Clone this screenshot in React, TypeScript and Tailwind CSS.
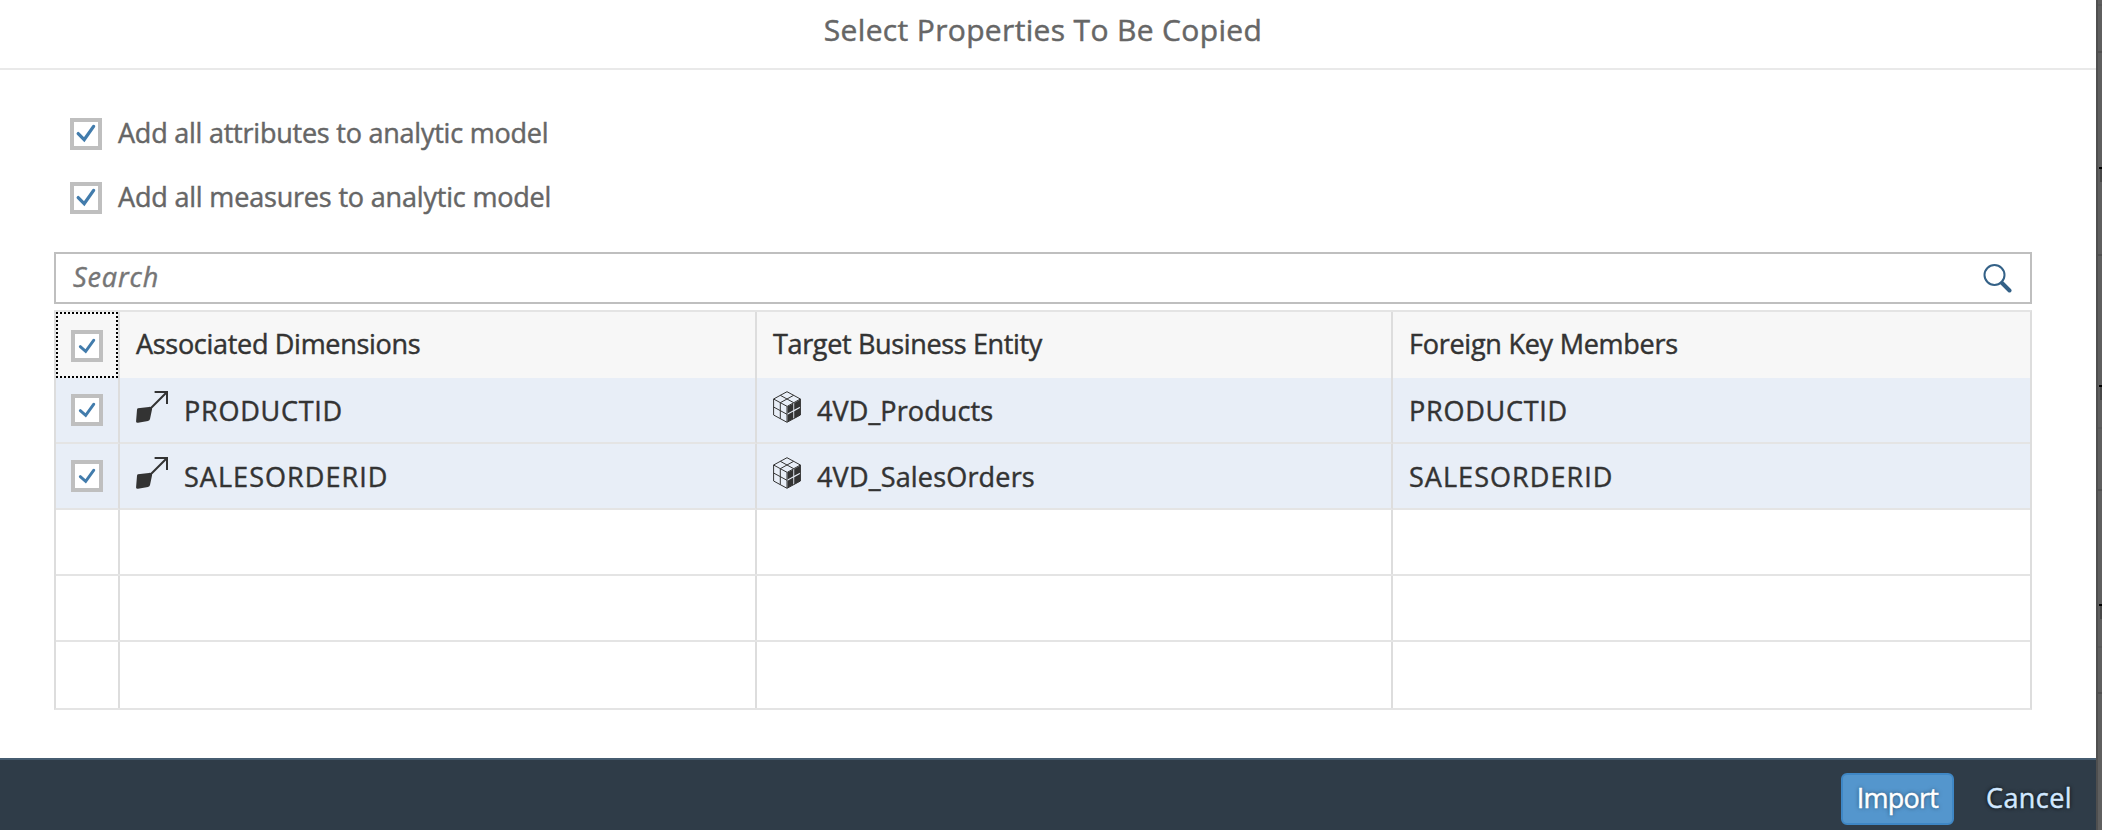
import React from "react";

function Check({ small = false }: { small?: boolean }) {
  return (
    <span className="flex h-8 w-8 shrink-0 items-center justify-center border-4 border-[#bfbfbf] bg-white">
      <svg viewBox="0 0 24 24" className="h-6 w-6" fill="none" stroke="#427cac" strokeLinecap="round" strokeLinejoin="miter">
        {small ? <path d="M5.3 12.6 L10.7 17.4 L18.8 6.2" strokeWidth="2.9" /> : <path d="M4.2 11.6 L10.2 17.6 L19.6 4.4" strokeWidth="3.3" />}
      </svg>
    </span>
  );
}

function AssociationIcon() {
  return (
    <svg viewBox="0 0 32 32" className="h-8 w-8 shrink-0" fill="none">
      <path d="M1.9 17.3 L13 15.9 Q16.6 15.4 16 18.6 L14 28 Q13.7 29.7 12 30 L2 31.8 Q-0.2 32 0.1 30 L1 18.7 Q1.1 17.5 1.9 17.3 Z" fill="#333" />
      <path d="M14.5 17.5 L31 1 M18.6 1 H31 V13" stroke="#333" strokeWidth="2" />
    </svg>
  );
}

function CubeIcon() {
  return (
    <svg viewBox="0 0 28 32" className="h-8 w-7 shrink-0" fill="none" stroke="#333" strokeWidth="1">
      <path d="M14 .7 L27.4 8 V24 L14 31.3 L.6 24 V8 Z M.6 8 L14 15.3 V31 M7.3 4.3 L20.7 11.7 M20.7 4.3 L7.3 11.7 V27.6 M.6 16 L14 23.3" />
      <path d="M14.5 15.6 L20.3 12.4 V19.3 L14.5 22.5 Z M21.2 11.9 L27.4 8.5 V15.4 L21.2 18.8 Z M14.5 23.8 L20.3 20.6 V27.8 L14.5 31 Z M21.2 20.2 L27.4 16.8 V24 L21.2 27.4 Z" fill="#333" stroke="none" />
      <path d="M14.3 15.3 L27.4 8" />
    </svg>
  );
}

const rows = [
  { dimension: "PRODUCTID", entity: "4VD_Products", key: "PRODUCTID", keyTracking: "tracking-[0.75px]", entityTracking: "tracking-[0.1px]" },
  { dimension: "SALESORDERID", entity: "4VD_SalesOrders", key: "SALESORDERID", keyTracking: "tracking-[1.05px]", entityTracking: "tracking-[0.18px]" },
];

const grid = "grid grid-cols-[64px_637px_636px_637px]";
const cell = "border-r-2 border-[#dddddd]";
const bodyCell = "flex items-center gap-4 border-b-2 border-b-[#e4e4e4] pt-0.5 pl-4";

// Horizontal rules of the canvas behind the dialog: the gap above each rule and its colour.
const canvasLines = [
  { gap: "h-[4px]", line: "bg-[#585858]" },
  { gap: "h-[45px]", line: "bg-[#505050]" },
  { gap: "h-[201px]", line: "bg-[#505050]" },
  { gap: "h-[171px]", line: "bg-[#585858]" },
  { gap: "h-[60px]", line: "bg-[#505050]" },
  { gap: "h-[155px]", line: "bg-[#585858]" },
  { gap: "h-[44px]", line: "bg-[#505050]" },
];
const markers = ["top-[167px]", "top-[385px]", "top-[604px]"];

export default function App() {
  return (
    <div className="flex h-[830px] w-[2102px] overflow-hidden bg-[#5f5f5f] font-['Open_Sans',sans-serif] text-[27px] leading-[36px] whitespace-nowrap text-[#333] [-webkit-text-stroke:0.45px_currentColor]">
      <div className="flex w-[2096px] flex-col bg-white">
        <header className="flex h-[70px] justify-center border-b-2 border-[#e9e9e9] pt-[12px] pr-[10px] text-[30px] text-[#666]">
          <h1 className="tracking-[0.35px]">Select Properties To Be Copied</h1>
        </header>
        <main className="flex flex-1 flex-col pr-[64px] pl-[54px]">
          <div className="flex flex-col gap-8 pt-12 pl-4 text-[#666]">
            <label className="flex h-8 items-center gap-4"><Check /><span className="pb-0.5 tracking-[-0.23px]">Add all attributes to analytic model</span></label>
            <label className="flex h-8 items-center gap-4"><Check /><span className="pb-0.5 tracking-[-0.18px]">Add all measures to analytic model</span></label>
          </div>
          <div className="mt-[38px] flex h-[52px] items-center justify-between border-2 border-[#bfbfbf] pr-[18px] pl-[17px]">
            <span className="pb-0.5 tracking-[0.9px] text-[#757575] italic">Search</span>
            <svg viewBox="0 0 30 30" className="h-[30px] w-[30px]" fill="none" stroke="#346187">
              <circle cx="12.5" cy="12" r="10" strokeWidth="2" />
              <path d="M20 20 L27.5 27.5" strokeWidth="4" strokeLinecap="round" />
            </svg>
          </div>
          <div className="mt-[6px] flex h-[400px] flex-col border-2 border-x-[#dddddd] border-y-[#e4e4e4]">
            <div className={`${grid} h-[66px] bg-[#f7f7f7]`}>
              <div className={cell}><div className="flex h-full items-center border-2 border-dotted border-black pt-0.5 pl-[13px]"><Check small /></div></div>
              <div className={`${cell} flex items-center pb-0.5 pl-4 tracking-[-0.3px]`}>Associated Dimensions</div>
              <div className={`${cell} flex items-center pb-0.5 pl-4 tracking-[-0.35px]`}>Target Business Entity</div>
              <div className="flex items-center pb-0.5 pl-4 tracking-[-0.25px]">Foreign Key Members</div>
            </div>
            {rows.map((r) => (
              <div key={r.dimension} className={`${grid} h-[66px] bg-[#e8eef7]`}>
                <div className={`${cell} border-b-2 border-b-[#e4e4e4] pt-4 pl-[15px]`}><Check small /></div>
                <div className={`${cell} ${bodyCell}`}><span className="pb-2"><AssociationIcon /></span><span className={r.keyTracking}>{r.dimension}</span></div>
                <div className={`${cell} ${bodyCell}`}><span className="pb-2"><CubeIcon /></span><span className={r.entityTracking}>{r.entity}</span></div>
                <div className={bodyCell}><span className={r.keyTracking}>{r.key}</span></div>
              </div>
            ))}
            {[0, 1, 2].map((i) => (
              <div key={i} className={`${grid} h-[66px] border-b-2 border-[#e4e4e4] last:border-b-0`}>
                <div className={cell} /><div className={cell} /><div className={cell} /><div />
              </div>
            ))}
          </div>
        </main>
        <footer className="flex h-[72px] items-start justify-end gap-8 border-t-2 border-[#465c70] bg-[#2f3c48] pt-[13px] pr-[24px]">
          <button className="h-[52px] w-[113px] rounded-md border-2 border-[#3f87c5] bg-[#5496cd] pb-0.5 tracking-[-0.75px] text-white [text-shadow:0_0_4px_#0008]">Import</button>
          <button className="h-[52px] w-[86px] pb-0.5 tracking-[0.4px] text-[#d1e8ff] [text-shadow:0_0_4px_#000]">Cancel</button>
        </footer>
      </div>
      <div className="relative w-[6px] border-l-2 border-[#4f4f4f]">
        {canvasLines.map((c, i) => (
          <div key={i}><div className={c.gap} /><div className={`h-[2px] ${c.line}`} /></div>
        ))}
        {markers.map((top) => (
          <div key={top} className={`absolute right-0 flex w-[3px] flex-col items-end ${top}`}>
            <div className="h-[2px] w-[3px] bg-black" />
            <div className="h-[13px] w-[2px] bg-[#484848]" />
          </div>
        ))}
      </div>
    </div>
  );
}
